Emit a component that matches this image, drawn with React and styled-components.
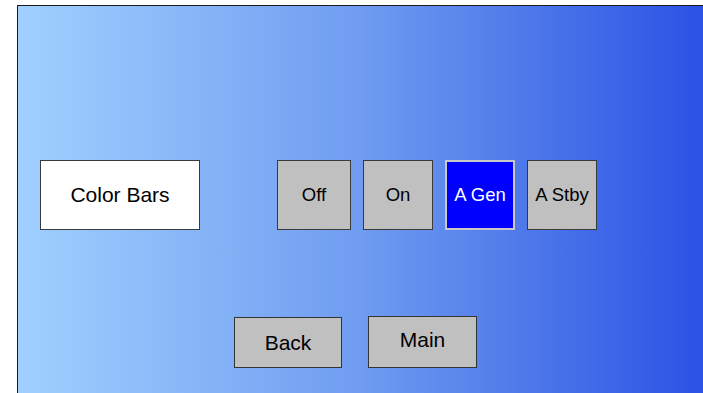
import React from "react";
import styled, { createGlobalStyle } from "styled-components";

const Global = createGlobalStyle`
  html, body {
    margin: 0;
    padding: 0;
    background: #ffffff;
    overflow: hidden;
  }
  body {
    font-family: "Liberation Sans", Arial, sans-serif;
  }
`;

const Panel = styled.div`
  margin: 5px 0 0 17px;
  width: 686px;
  height: 388px;
  box-sizing: border-box;
  border-top: 1px solid #1a1a1a;
  border-left: 1px solid #1a1a1a;
  background: linear-gradient(to right, #a0d0ff 0%, #6f9cf0 50%, #2a52e4 100%);
  padding: 154px 0 0 22px;
  display: flex;
  flex-direction: column;
`;

const TopRow = styled.div`
  display: flex;
  align-items: flex-start;
`;

const Label = styled.div`
  width: 160px;
  height: 70px;
  box-sizing: border-box;
  background: #ffffff;
  border: 1px solid #3a3a3a;
  display: flex;
  align-items: center;
  justify-content: center;
  font-size: 21px;
  color: #000;
  margin-right: 77px;
`;

const Choices = styled.div`
  display: flex;
  gap: 12px;
`;

const Choice = styled.div`
  width: ${(p) => p.$w || 70}px;
  height: 70px;
  box-sizing: border-box;
  background: ${(p) => (p.$active ? "#0000ff" : "#c0c0c0")};
  border: ${(p) => (p.$active ? "2px solid #c8c8c8" : "1px solid #3a3a3a")};
  color: ${(p) => (p.$active ? "#ffffff" : "#000000")};
  display: flex;
  align-items: center;
  justify-content: center;
  font-size: 18.5px;
`;

const BottomRow = styled.div`
  display: flex;
  align-items: flex-start;
  gap: 26px;
  margin-top: 86px;
  padding-left: 194px;
`;

const NavButton = styled.div`
  width: ${(p) => p.$w}px;
  height: ${(p) => p.$h}px;
  box-sizing: border-box;
  background: #c0c0c0;
  border: 1px solid #333;
  display: flex;
  align-items: center;
  justify-content: center;
  font-size: 21px;
  color: #000;
  margin-top: ${(p) => p.$dy || 0}px;
  padding-bottom: ${(p) => p.$pb || 0}px;
`;

export default function App() {
  const modes = [
    { name: "Off", w: 74 },
    { name: "On" },
    { name: "A Gen", active: true },
    { name: "A Stby" },
  ];
  return (
    <>
      <Global />
      <Panel>
        <TopRow>
          <Label>Color Bars</Label>
          <Choices>
            {modes.map((m) => (
              <Choice key={m.name} $w={m.w} $active={m.active}>
                {m.name}
              </Choice>
            ))}
          </Choices>
        </TopRow>
        <BottomRow>
          <NavButton $w={108} $h={51} $dy={1}>Back</NavButton>
          <NavButton $w={109} $h={52} $pb={4}>Main</NavButton>
        </BottomRow>
      </Panel>
    </>
  );
}
